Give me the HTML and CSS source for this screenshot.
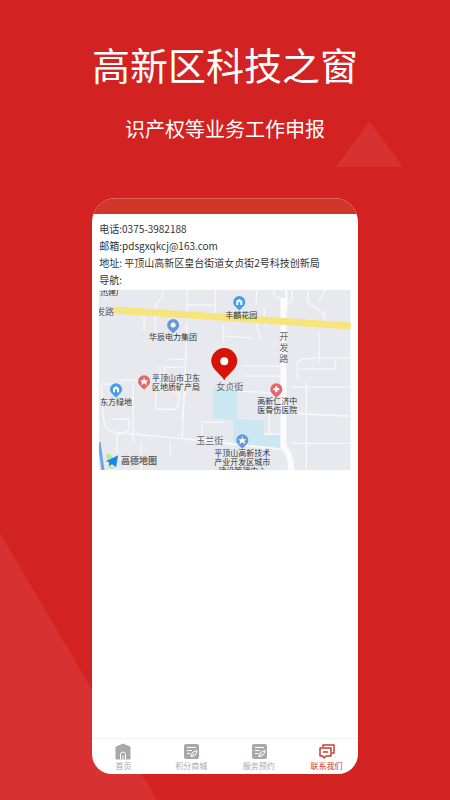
FILE: index.html
```html
<!DOCTYPE html>
<html lang="zh-CN">
<head>
    <meta charset="utf-8">
    <meta name="viewport" content="width=device-width, initial-scale=1">
    <title>高新区科技之窗</title>
    <link rel="stylesheet" href="styles.css">
</head>
<body>
    <!-- background triangles -->
    <div class="shape shape-large"></div>
    <div class="shape shape-small"></div>

    <header class="hero">
        <h1>高新区科技之窗</h1>
        <p>识产权等业务工作申报</p>
    </header>

    <div class="phone">
        <div class="status-bar"></div>
        <main class="contact">
            <p>电话:0375-3982188</p>
            <p>邮箱:pdsgxqkcj@163.com</p>
            <p>地址: 平顶山高新区皇台街道女贞街2号科技创新局</p>
            <p>导航:</p>
            <svg class="map" viewBox="0 0 251 180" role="img" aria-label="地图">
                <defs>
                    <path id="drop" d="M0 2.500C-2 0-6-2-6-6A6 6 0 0 1 6-6C6-2 2 0 0 2.500Z"/>
                </defs>
                <rect width="251" height="180" fill="#e8e9ee"/>

                <!-- water -->
                <path fill="#cbe7f2" d="M114 97l24 3v29l27 1v14h16v14l-47-3v-25l-20-2z"/>

                <!-- small streets -->
                <g fill="none" stroke="#f8f8fa" stroke-width="1.3">
                    <path d="M7 0v10M64 0v8q-7 2-7 9v11M45 27v15M56 28v19h8M88 0v30M88 15h28M116 0v30"/>
                    <path d="M88 32l-5 117M64 96l2-19h17M61 90V75M70 69h18M2 94h18l2-4h16M34 92v60M2 95l3 36q1 9 10 11l74 7 38 1"/>
                    <path d="M58 90l-2 29h20q5-4 4-16l-24-6M14 129h16v11l-12 5v20M42 152v28M71 152v13M83 128l3-28M103 148v-16h21"/>
                    <path d="M124 35v18M126 46l27 2M156 30l5 18M143 76h38M145 86h37M139 101l43 2M170 120v24M165 144h16"/>
                    <path d="M157 0v14M165 18v18M174 0q0 8 7 8M193 0v7q0 6-6 5M209 0l-1 12 17 12v14M219 12l7-12"/>
                    <path d="M220 44v27M198 89V73q2-5 20-5h33M198 79h38v-9M192 97h59M192 123l59 3M207 92v88M192 153h59"/>
                </g>
                <path d="M184 8V157q7 5 8 23" fill="none" stroke="#fbfbfc" stroke-width="6"/>
                <path d="M187 0v20" stroke="#fbfbfc" stroke-width="2"/>
                <path d="M89 149l94 10" fill="none" stroke="#f8f8fa" stroke-width="2"/>

                <!-- main road -->
                <path d="M14 20L120 27 251 36" fill="none" stroke="#f5e57a" stroke-width="7"/>
                <path d="M0 152l4 28" stroke="#6aa5ed" stroke-width="3"/>

                <g class="road-name">
                    <text x="-3" y="25">发路</text>
                    <text x="180" y="50">开</text>
                    <text x="180" y="61">发</text>
                    <text x="180" y="72">路</text>
                    <text x="117" y="100">女贞街</text>
                    <text x="97" y="154">玉兰街</text>
                </g>

                <g class="place-name">
                    <text x="1" y="5">迅建厂</text>
                    <text x="126" y="28">丰麟花园</text>
                    <text x="50" y="50">华辰电力集团</text>
                    <text x="53" y="91">平顶山市卫东</text>
                    <text x="53" y="100">区地质矿产局</text>
                    <text x="1" y="115">东方绿地</text>
                    <text x="158" y="114">高新仁济中</text>
                    <text x="158" y="123">医骨伤医院</text>
                    <text x="115" y="166">平顶山高新技术</text>
                    <text x="115" y="175">产业开发区城市</text>
                    <text x="119" y="184">建设管理中心</text>
                </g>

                <!-- place markers -->
                <g transform="translate(140 18)">
                    <use href="#drop" fill="#459fe8"/>
                    <path fill="#fff" d="M-3-3v-4l3-2 3 2v4H1v-3h-2v3z"/>
                </g>
                <g transform="translate(17 105)">
                    <use href="#drop" fill="#459fe8"/>
                    <path fill="#fff" d="M-3-3v-4l3-2 3 2v4H1v-3h-2v3z"/>
                </g>
                <g transform="translate(74 41)">
                    <use href="#drop" fill="#6799d8"/>
                    <circle cy="-6" r="2.5" fill="#fff"/>
                </g>
                <g transform="translate(143 156)">
                    <use href="#drop" fill="#6799d8"/>
                    <path fill="#fff" d="M0-10l1 3h3l-2 2 1 3-3-2-3 2 1-3-2-2h3z"/>
                </g>
                <g transform="translate(45 97)">
                    <use href="#drop" fill="#e96569"/>
                    <path fill="#fff" d="M0-10l1 3h3l-2 2 1 3-3-2-3 2 1-3-2-2h3z"/>
                </g>
                <g transform="translate(177 105)">
                    <use href="#drop" fill="#e96569"/>
                    <path d="M-3-6h6M0-9v6" stroke="#fff" stroke-width="2"/>
                </g>

                <!-- current position -->
                <path fill="#d71308" d="M125 90c-3-6-13-11-13-19a13 13 0 0 1 26 0c0 8-10 13-13 19z"/>
                <circle cx="125" cy="71" r="4" fill="#fff"/>

                <!-- map provider -->
                <path fill="#b9e995" d="M7 165q4-3 6 1l1 3-6 2zM8 175l8 2q-4 4-8-2z"/>
                <path fill="#1688ee" d="M7 171l12-6-2 12-4-3-3 2v-4z"/>
                <text class="map-brand" x="22" y="174">高德地图</text>
            </svg>
        </main>
        <nav class="tabs">
            <a href="#home">
                <svg viewBox="0 0 16 18">
                    <path fill="#a8a8a8" d="M1 5l7-3 7 3v12H1z" stroke="#a8a8a8" stroke-linejoin="round"/>
                    <path fill="none" stroke="#fff" d="M5.500 17.500v-5a2.500 2.500 0 0 1 5 0v5M8 13.500v4"/>
                </svg>
                首页
            </a>
            <a href="#mall">
                <svg viewBox="0 0 16 18">
                    <rect x="1" y="2" width="15" height="15" rx="2" fill="#a8a8a8"/>
                    <path fill="none" stroke="#fff" d="M4 5.500h9M4 8.500h5M4 11.500h3M8 14.500q-1-4 6-6-1 6-6 6l3-3"/>
                </svg>
                积分商城
            </a>
            <a href="#booking">
                <svg viewBox="0 0 16 18">
                    <rect x="1" y="2" width="15" height="15" rx="2" fill="#a8a8a8"/>
                    <path fill="none" stroke="#fff" d="M4 5.500h9M4 8.500h5M4 11.500h3M8 14.500q-1-4 6-6-1 6-6 6l3-3"/>
                </svg>
                服务预约
            </a>
            <a href="#contact" class="active">
                <svg viewBox="0 0 16 18">
                    <path fill="none" stroke="#cb3b30" stroke-width="1.500" stroke-linejoin="round" d="M4 5V3h11v8h-2M1 6h11v8H7l-2 2-1-2H1zM4 10h5"/>
                </svg>
                联系我们
            </a>
        </nav>
    </div>
</body>
</html>
```

FILE: styles.css
```css
* {
    box-sizing: border-box;
}
body {
    position: relative;
    display: flex;
    flex-direction: column;
    align-items: center;
    min-height: 100vh;
    margin: 0;
    padding-bottom: 26px;
    overflow-x: hidden;
    background-color: #d22222;
    font-family: "Noto Sans CJK SC", sans-serif;
}
h1, p {
    margin: 0;
    font-weight: normal;
}

/* Background decoration */
.shape {
    position: absolute;
    background-color: #d83131;
}
.shape-large {
    left: 0;
    bottom: 0;
    width: 157px;
    height: 267px;
    clip-path: polygon(0 0, 100% 100%, 0 100%);
}
.shape-small {
    top: 121px;
    right: 47px;
    width: 67px;
    height: 46px;
    clip-path: polygon(50% 0, 100% 100%, 0 100%);
}

.hero {
    position: relative;
    padding-top: 38px;
    margin-bottom: 54px;
    color: #fff;
    text-align: center;
}
.hero h1 {
    font-size: 38px;
    line-height: 52px;
}
.hero p {
    margin-top: 24px;
    font-size: 20px;
    line-height: 30px;
}

/* Phone */
.phone {
    position: relative;
    display: flex;
    flex: 1;
    flex-direction: column;
    width: 59%;
    overflow: hidden;
    background-color: #fff;
    border-radius: 24px 24px 20px 20px;
}
.status-bar {
    height: 16px;
    background-color: #cf3829;
    border: 1px solid #dc6256;
    border-bottom: none;
    border-radius: 24px 24px 0 0;
}
.contact {
    flex: 1;
    padding: 6px 7px 0;
    color: #333;
    font-size: 10px;
    line-height: 17px;
}
.map {
    display: block;
    width: 100%;
    margin-top: 2px;
}
.road-name {
    fill: #666;
    font-size: 9px;
}
.place-name {
    fill: #333;
    font-size: 8px;
}
.map-brand {
    fill: #666;
    font-size: 9px;
    font-weight: bold;
}

/* Bottom tabs */
.tabs {
    display: flex;
    justify-content: center;
    height: 36px;
    padding-top: 3px;
    border-top: 1px solid #f3f3f3;
}
.tabs a {
    display: flex;
    flex: 0 0 25.5%;
    flex-direction: column;
    align-items: center;
    color: #a8a8a8;
    font-size: 8px;
    line-height: 12px;
    text-decoration: none;
}
.tabs svg {
    width: 16px;
    height: 18px;
}
.tabs .active {
    color: #cb3b30;
}
```
